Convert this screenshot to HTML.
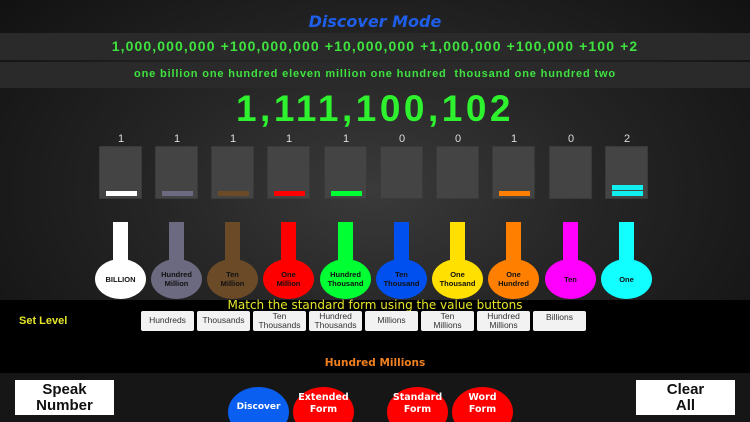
<!DOCTYPE html>
<html><head><meta charset="utf-8"><style>
*{margin:0;padding:0;box-sizing:border-box}
html{width:750px;height:422px;overflow:hidden}
body{width:750px;height:422px;overflow:hidden;position:relative;background:radial-gradient(ellipse at 50% 45%,#3a3a3a 0%,#262626 40%,#161616 80%,#0e0e0e 100%);font-family:"Liberation Sans",sans-serif}
.a{position:absolute}
.band{left:0;width:750px;background:#2a2a2a;color:#3fe23f;text-align:center;font-weight:bold}
.num{color:#ddd;font-size:11px;width:44px;text-align:center;top:133px}
.tile{width:43px;height:53px;top:146px;background:#444;border:1px solid #3a3a3a}
.bar{position:absolute;left:6px;width:31px;height:5px}
.stem{width:15px;top:222px;height:42px}
.bulb{width:51px;height:40px;top:259px;border-radius:50%;font-size:7.5px;font-weight:bold;color:#111;display:flex;align-items:center;justify-content:center;text-align:center;line-height:9px}
.lv{top:311px;width:53px;height:20px;background:#f2f2f2;border-radius:2px;font-size:8.5px;color:#333;display:flex;align-items:center;justify-content:center;text-align:center;line-height:9.5px}
.circ{top:14px;width:61px;height:50px;border-radius:50%;color:#fff;font-size:9.5px;font-weight:bold;display:flex;align-items:flex-start;padding-top:5px;justify-content:center;text-align:center;line-height:12px;font-family:"DejaVu Sans",sans-serif}
.wb{top:380px;width:99px;height:35px;background:#fff;font-weight:bold;font-size:15px;text-align:center;line-height:16px;padding-top:2px;color:#111}
</style></head><body>
<div class="a" style="left:0;top:12px;width:750px;text-align:center;color:#1e5ee8;font-style:italic;font-weight:bold;font-size:16px;font-family:'DejaVu Sans',sans-serif">Discover Mode</div>
<div class="a band" style="top:33px;height:27px;line-height:26px;font-size:14px;letter-spacing:1.1px">1,000,000,000 +100,000,000 +10,000,000 +1,000,000 +100,000 +100 +2</div>
<div class="a band" style="top:62px;height:26px;line-height:24px;font-size:11px;letter-spacing:0.85px">one billion one hundred eleven million one hundred &nbsp;thousand one hundred two</div>
<div class="a" style="left:0;top:88px;width:750px;text-align:center;color:#2ef22e;font-weight:bold;font-size:37px;letter-spacing:3.5px">1,111,100,102</div>

<div class="a num" style="left:99px">1</div><div class="a num" style="left:155px">1</div><div class="a num" style="left:211px">1</div><div class="a num" style="left:267px">1</div><div class="a num" style="left:324px">1</div><div class="a num" style="left:380px">0</div><div class="a num" style="left:436px">0</div><div class="a num" style="left:492px">1</div><div class="a num" style="left:549px">0</div><div class="a num" style="left:605px">2</div>

<div class="a tile" style="left:99px"><div class="bar" style="top:44px;background:#fff"></div></div>
<div class="a tile" style="left:155px"><div class="bar" style="top:44px;background:#6c6a80"></div></div>
<div class="a tile" style="left:211px"><div class="bar" style="top:44px;background:#6b4a28"></div></div>
<div class="a tile" style="left:267px"><div class="bar" style="top:44px;background:#f00"></div></div>
<div class="a tile" style="left:324px"><div class="bar" style="top:44px;background:#0f3"></div></div>
<div class="a tile" style="left:380px"></div>
<div class="a tile" style="left:436px"></div>
<div class="a tile" style="left:492px"><div class="bar" style="top:44px;background:#ff8000"></div></div>
<div class="a tile" style="left:549px"></div>
<div class="a tile" style="left:605px"><div class="bar" style="top:38px;background:#1ee"></div><div class="bar" style="top:44px;background:#1ee"></div></div>

<div class="a stem" style="left:113px;background:#fff"></div><div class="a bulb" style="left:95px;background:#fff">BILLION</div>
<div class="a stem" style="left:169px;background:#6c6a80"></div><div class="a bulb" style="left:151px;background:#6c6a80">Hundred<br>Million</div>
<div class="a stem" style="left:225px;background:#6b4a28"></div><div class="a bulb" style="left:207px;background:#6b4a28">Ten<br>Million</div>
<div class="a stem" style="left:281px;background:#f00"></div><div class="a bulb" style="left:263px;background:#f00">One<br>Million</div>
<div class="a stem" style="left:338px;background:#0f3"></div><div class="a bulb" style="left:320px;background:#0f3">Hundred<br>Thousand</div>
<div class="a stem" style="left:394px;background:#0050f0"></div><div class="a bulb" style="left:376px;background:#0050f0">Ten<br>Thousand</div>
<div class="a stem" style="left:450px;background:#ffe000"></div><div class="a bulb" style="left:432px;background:#ffe000">One<br>Thousand</div>
<div class="a stem" style="left:506px;background:#ff8000"></div><div class="a bulb" style="left:488px;background:#ff8000">One<br>Hundred</div>
<div class="a stem" style="left:563px;background:#f0f"></div><div class="a bulb" style="left:545px;background:#f0f">Ten</div>
<div class="a stem" style="left:619px;background:#1ff"></div><div class="a bulb" style="left:601px;background:#1ff">One</div>

<div class="a" style="left:0;top:300px;width:750px;height:73px;background:#000"></div>
<div class="a" style="left:0;top:298px;width:750px;text-align:center;color:#e6e62a;font-size:12px;font-family:'DejaVu Sans',sans-serif">Match the standard form using the value buttons</div>
<div class="a" style="left:19px;top:315px;color:#e6e62a;font-weight:bold;font-size:11px">Set Level</div>
<div class="a lv" style="left:141px">Hundreds</div>
<div class="a lv" style="left:197px">Thousands</div>
<div class="a lv" style="left:253px">Ten<br>Thousands</div>
<div class="a lv" style="left:309px">Hundred<br>Thousands</div>
<div class="a lv" style="left:365px">Millions</div>
<div class="a lv" style="left:421px">Ten<br>Millions</div>
<div class="a lv" style="left:477px">Hundred<br>Millions</div>
<div class="a lv" style="left:533px;align-items:flex-start;padding-top:2px">Billions</div>
<div class="a" style="left:0;top:357px;width:750px;text-align:center;color:#f08020;font-weight:bold;font-size:10.5px;font-family:'DejaVu Sans',sans-serif">Hundred Millions</div>

<div class="a" style="left:0;top:373px;width:750px;height:49px;background:#161616;overflow:hidden">
<div class="a circ" style="left:228px;background:#0a5ff0;padding-top:14px;font-size:9px">Discover</div>
<div class="a circ" style="left:293px;background:#f00">Extended<br>Form</div>
<div class="a circ" style="left:387px;background:#f00">Standard<br>Form</div>
<div class="a circ" style="left:452px;background:#f00">Word<br>Form</div>
</div>
<div class="a wb" style="left:15px">Speak<br>Number</div>
<div class="a wb" style="left:636px">Clear<br>All</div>
</body></html>
